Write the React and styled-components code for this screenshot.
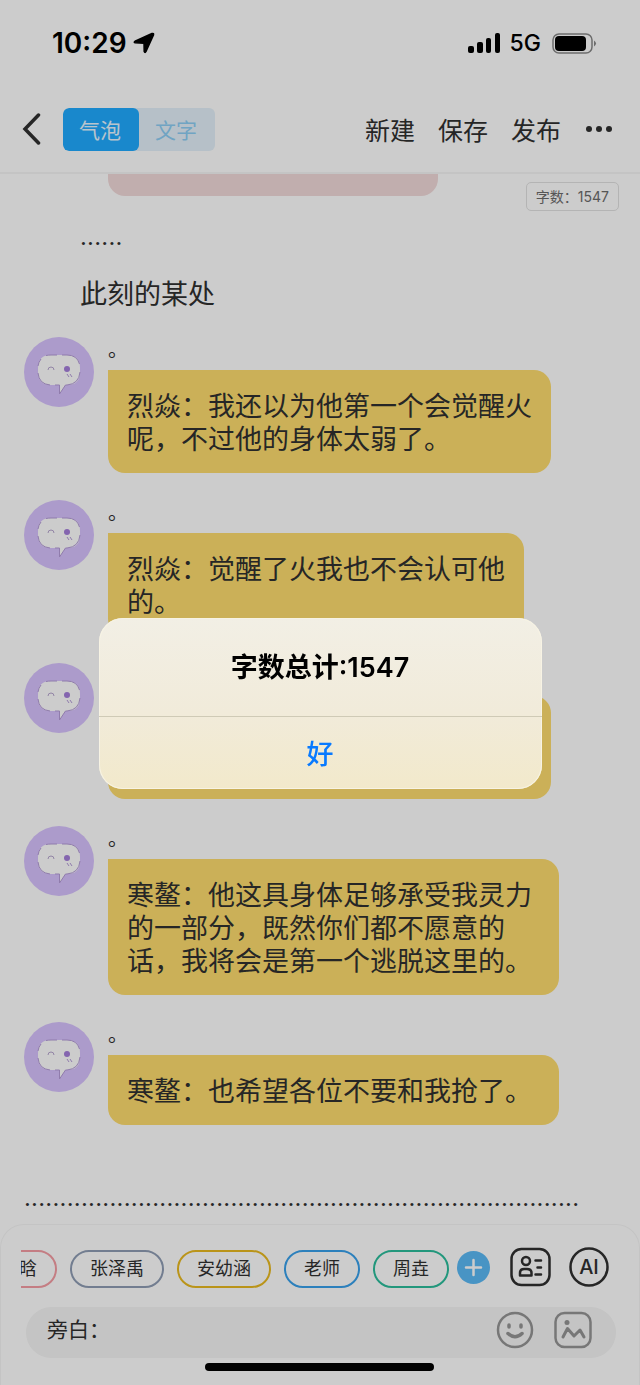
import React, { useState } from 'react';
import styled, { createGlobalStyle } from 'styled-components';

const GlobalStyle = createGlobalStyle`
  * {
    box-sizing: border-box;
  }
  body {
    margin: 0;
    background: #fff;
    color: #303030;
    font-family: Inter, "Noto Sans CJK SC", sans-serif;
  }
  button, input {
    font-family: inherit;
    color: inherit;
    padding: 0;
    border: 0;
    background: none;
  }
  svg {
    display: block;
  }
`;

const Page = styled.div`
  display: flex;
  flex-direction: column;
  min-height: 100vh;
`;

const StatusBar = styled.div`
  display: flex;
  align-items: center;
  height: 86px;
  padding: 0 43px 0 52px;
  color: #000;
`;

const Time = styled.span`
  font-size: 28px;
  font-weight: 600;
  line-height: 36px;
  margin-right: 6px;
`;

const Network = styled.span`
  font-size: 23px;
  font-weight: 500;
  line-height: 32px;
  margin: 0 11px 0 9px;
`;

const Spacer = styled.div`
  flex: 1;
`;

const Toolbar = styled.header`
  display: flex;
  align-items: center;
  height: 88px;
  padding: 0 27px 0 22px;
  border-bottom: 2px solid #f5f5f5;
`;

const BackButton = styled.button`
  width: 41px;
`;

const Tabs = styled.div`
  display: flex;
  border-radius: 6px;
  overflow: hidden;
  background: #e4f1fa;
`;

const Tab = styled.button`
  width: 76px;
  height: 43px;
  padding-right: 2px;
  font-size: 21px;
  border-radius: 6px;
  background: ${props => (props.$active ? '#20abff' : 'transparent')};
  color: ${props => (props.$active ? '#e8f6ff' : '#8ccdf4')};
`;

const Actions = styled.div`
  display: flex;
  align-items: center;
  gap: 23px;
`;

const Action = styled.button`
  padding-top: 3px;
  font-size: 25px;
  line-height: 36px;
`;

const MoreButton = styled.button`
  margin-left: 1px;
`;

const Chat = styled.main`
  position: relative;
  flex: 1;
  padding: 0 24px;
`;

const Counter = styled.div`
  position: absolute;
  top: 8px;
  right: 21px;
  padding: 0 9px;
  border: 1px solid #e2e2e2;
  border-radius: 5px;
  background: #fff;
  color: #6c6c6c;
  font-size: 14px;
  line-height: 27px;
`;

const PreviousBubble = styled.div`
  width: 330px;
  max-width: 70%;
  height: 22px;
  margin-left: 84px;
  border-radius: 0 0 17px 17px;
  background: #f2dada;
`;

const Narration = styled.p`
  margin: 0;
  padding: 22px 56px 14px;
  font-size: 27px;
  line-height: 40px;
`;

const Dots = styled.p`
  margin: 0;
  padding: ${props => (props.$inset ? '24px 56px 0' : '56px 0 0')};
  font-family: Roboto, sans-serif;
  font-size: 27px;
  line-height: 33px;
`;

const Messages = styled.div`
  display: flex;
  flex-direction: column;
  gap: 27px;
  padding-top: 8px;
`;

const MessageRow = styled.article`
  display: flex;
  align-items: flex-start;
  gap: 14px;
`;

const Name = styled.div`
  height: 33px;
  font-size: 20px;
  line-height: 26px;
`;

const Bubble = styled.div`
  width: fit-content;
  min-width: ${props => (props.$empty ? '443px' : '0')};
  min-height: ${props => (props.$empty ? '103px' : '70px')};
  padding: 20px ${props => (props.$wide ? '27px' : '19px')} 17px 19px;
  border-radius: 0 17px 17px 17px;
  background: #fedd6e;
  font-size: 27px;
  line-height: 33px;
  white-space: pre-line;
`;

const Footer = styled.footer`
  border: 1px solid #f6f6f6;
  border-bottom: 0;
  border-radius: 24px 24px 0 0;
  padding: 23px 22px 14px 20px;
`;

const CastRow = styled.div`
  display: flex;
  align-items: center;
  height: 42px;
`;

const Cast = styled.div`
  display: flex;
  flex: 1;
  min-width: 0;
  justify-content: flex-end;
  gap: 13px;
  overflow: hidden;
`;

const Pill = styled.button`
  flex: none;
  height: 38px;
  padding: 0 18px;
  border: 2px solid ${props => props.$color};
  border-radius: 19px;
  font-size: 18px;
  line-height: 34px;
`;

const CastTools = styled.div`
  display: flex;
  align-items: center;
  padding: 0 8px 4px 8px;
`;

const ToolButton = styled.button`
  margin-left: ${props => props.$gap || 0}px;
`;

const InputBar = styled.label`
  display: flex;
  align-items: flex-start;
  gap: 20px;
  height: 51px;
  margin: 17px 1px 5px 5px;
  padding: 4px 24px 0 21px;
  border-radius: 26px;
  background: #f5f5f5;
`;

const TextInput = styled.input`
  flex: 1;
  min-width: 0;
  height: 34px;
  font-size: 21px;
  outline: none;
`;

const HomeIndicator = styled.div`
  width: 229px;
  height: 8px;
  margin: 0 auto;
  border-radius: 4px;
  background: #000;
`;

const Overlay = styled.div`
  position: fixed;
  inset: 0;
  display: flex;
  align-items: center;
  justify-content: center;
  padding-top: 21px;
  background: rgba(0, 0, 0, 0.2);
`;

const Alert = styled.div`
  width: 443px;
  max-width: 90%;
  border-radius: 24px;
  overflow: hidden;
  background: linear-gradient(#f2efe5, #f1ebda 55%, #f2e9cb);
  box-shadow: inset 0 0 0 1px #f7f3e4;
  text-align: center;
`;

const AlertTitle = styled.h2`
  margin: 0;
  padding: 30px 20px 28px;
  color: #000;
  font-size: 27px;
  font-weight: 600;
  line-height: 40px;
`;

const AlertButton = styled.button`
  display: block;
  width: 100%;
  height: 73px;
  border-top: 1px solid #cfcab6;
  color: #087aff;
  font-size: 27px;
  font-weight: 500;
`;

const messages = [
  { text: '烈焱：我还以为他第一个会觉醒火\n呢，不过他的身体太弱了。' },
  { text: '烈焱：觉醒了火我也不会认可他\n的。' },
  { text: '' },
  { text: '寒鳌：他这具身体足够承受我灵力\n的一部分，既然你们都不愿意的\n话，我将会是第一个逃脱这里的。', wide: true },
  { text: '寒鳌：也希望各位不要和我抢了。', wide: true },
];

const cast = [
  { name: '晗', color: '#f59da4' },
  { name: '张泽禹', color: '#8f9db4' },
  { name: '安幼涵', color: '#e9ba20' },
  { name: '老师', color: '#37a0ec' },
  { name: '周垚', color: '#2bbd9b' },
];

const AvatarIcon = styled.svg`
  flex: none;
`;

const Avatar = () => (
  <AvatarIcon width="70" height="70" viewBox="0 0 70 70">
    <circle cx="35" cy="35" r="35" fill="#d8c2fe" />
    <path
      d="M27 18H43Q56 18 56 31V35Q56 48 43 48H41.5L35.5 57V48H27Q14 48 14 35V31Q14 18 27 18Z"
      fill="#fff"
    />
    <path
      d="M22 18.500Q24 18 27 18H33M38 18H43Q53 18 55.500 27M56 35Q55 47 43 48H41.5L35.5 57V48H31M26 48Q15 47 14 36M14 29Q14.500 25 17 22"
      fill="none"
      stroke="#b49bd8"
      strokeWidth="1"
    />
    <path d="M24 33Q24 30 27 30T30 33" fill="none" stroke="#b7a5cf" strokeWidth="1" />
    <circle cx="43" cy="32" r="3" fill="#a57fdb" />
    <path d="M43 37L45 40M46 37L48 40" stroke="#b49bd8" strokeWidth="1" />
  </AvatarIcon>
);

const LocationIcon = () => (
  <svg width="22" height="22" viewBox="0 0 22 22">
    <path
      d="M19 1.500 2 9.300Q.5 10.500 2 10.800L11 11.200 11.200 19.500Q12 21.500 13 19.500L20.500 3Q21 1 19 1.500Z"
      stroke="#000"
      strokeWidth="1.500"
      strokeLinejoin="round"
    />
  </svg>
);

const SignalIcon = () => (
  <svg width="33" height="21" viewBox="0 0 33 21">
    <rect x="0" y="13" width="6" height="7" rx="2" />
    <rect x="9" y="9" width="6" height="11" rx="2" />
    <rect x="18" y="5" width="5" height="15" rx="2" />
    <rect x="27" y="0" width="5" height="20" rx="2" />
  </svg>
);

const BatteryIcon = () => (
  <svg width="45" height="21" viewBox="0 0 45 21">
    <rect x="1" y="1" width="39" height="19" rx="6" fill="none" stroke="#888" strokeWidth="1.500" />
    <rect x="3" y="3" width="31" height="15" rx="4" />
    <path d="M42 7.500Q46 10.500 42 13.500Z" fill="#888" />
  </svg>
);

const BackIcon = () => (
  <svg width="19" height="32" viewBox="0 0 19 32" fill="none" stroke="#303030" strokeWidth="3.500" strokeLinecap="round">
    <path d="M16.500 2 3 16 16.500 30" />
  </svg>
);

const MoreIcon = () => (
  <svg width="28" height="8" viewBox="0 0 28 8" fill="#303030">
    <circle cx="4" cy="4" r="3" />
    <circle cx="14" cy="4" r="3" />
    <circle cx="24" cy="4" r="3" />
  </svg>
);

const PlusIcon = () => (
  <svg width="33" height="33" viewBox="0 0 33 33">
    <circle cx="16.500" cy="16.500" r="16.500" fill="#5bbaf6" />
    <path d="M16.500 9V24M9 16.500H24" stroke="#fff" strokeWidth="2.500" strokeLinecap="round" />
  </svg>
);

const MembersIcon = () => (
  <svg width="41" height="40" viewBox="0 0 41 40" fill="none" stroke="#303030" strokeWidth="2.500">
    <rect x="1.500" y="2" width="38" height="36" rx="10" />
    <circle cx="16" cy="14" r="4" />
    <path d="M10 28.500V26Q10 22 14 22H17Q21.500 22 21.500 26V28.500Z" strokeLinejoin="round" />
    <path d="M25.500 13.500H31M27.500 20.500H31M25.500 27.500H31" strokeLinecap="round" />
  </svg>
);

const AiIcon = () => (
  <svg width="40" height="40" viewBox="0 0 40 40">
    <circle cx="20" cy="20" r="18.500" fill="none" stroke="#303030" strokeWidth="2.500" />
    <text x="20" y="27" textAnchor="middle" fontSize="20" fontWeight="500" fill="#303030">AI</text>
  </svg>
);

const SmileIcon = () => (
  <svg width="38" height="38" viewBox="0 0 38 38" fill="none" stroke="#959595" strokeLinecap="round">
    <circle cx="19" cy="19" r="17" strokeWidth="2.500" />
    <path d="M13 14V16M25 14V16" strokeWidth="3.500" />
    <path d="M12 22.500Q19 29 26 22.500" strokeWidth="3.500" />
  </svg>
);

const PictureIcon = () => (
  <svg width="38" height="38" viewBox="0 0 38 38" fill="none" stroke="#959595">
    <rect x="1.500" y="2" width="35" height="34" rx="9" strokeWidth="2.500" />
    <circle cx="13" cy="11.500" r="2.500" fill="#959595" stroke="none" />
    <path d="M9 26 13.500 17.500 20 25 26 19 30 26" strokeWidth="3" strokeLinecap="round" strokeLinejoin="round" />
  </svg>
);

const App = () => {
  const [tab, setTab] = useState('bubble');
  const [draft, setDraft] = useState('旁白：');
  const [alertOpen, setAlertOpen] = useState(true);

  return (
    <>
      <GlobalStyle />
      <Page>
        <StatusBar>
          <Time>10:29</Time>
          <LocationIcon />
          <Spacer />
          <SignalIcon />
          <Network>5G</Network>
          <BatteryIcon />
        </StatusBar>
        <Toolbar>
          <BackButton aria-label="返回"><BackIcon /></BackButton>
          <Tabs>
            <Tab $active={tab === 'bubble'} onClick={() => setTab('bubble')}>气泡</Tab>
            <Tab $active={tab === 'text'} onClick={() => setTab('text')}>文字</Tab>
          </Tabs>
          <Spacer />
          <Actions>
            <Action>新建</Action>
            <Action>保存</Action>
            <Action>发布</Action>
            <MoreButton aria-label="更多"><MoreIcon /></MoreButton>
          </Actions>
        </Toolbar>
        <Chat>
          <Counter>字数：1547</Counter>
          <PreviousBubble />
          <Dots $inset>......</Dots>
          <Narration>此刻的某处</Narration>
          <Messages>
            {messages.map((message, index) => (
              <MessageRow key={index}>
                <Avatar />
                <div>
                  <Name>。</Name>
                  <Bubble $wide={message.wide} $empty={!message.text}>{message.text}</Bubble>
                </div>
              </MessageRow>
            ))}
          </Messages>
          <Dots>{'.'.repeat(78)}</Dots>
        </Chat>
        <Footer>
          <CastRow>
            <Cast>
              {cast.map(person => (
                <Pill key={person.name} $color={person.color}>{person.name}</Pill>
              ))}
            </Cast>
            <CastTools>
              <ToolButton aria-label="添加角色"><PlusIcon /></ToolButton>
              <ToolButton $gap={20} aria-label="角色列表"><MembersIcon /></ToolButton>
              <ToolButton $gap={18} aria-label="AI"><AiIcon /></ToolButton>
            </CastTools>
          </CastRow>
          <InputBar>
            <TextInput aria-label="输入内容" value={draft} onChange={e => setDraft(e.target.value)} />
            <ToolButton aria-label="表情"><SmileIcon /></ToolButton>
            <ToolButton aria-label="图片"><PictureIcon /></ToolButton>
          </InputBar>
          <HomeIndicator />
        </Footer>
      </Page>
      {alertOpen && (
        <Overlay>
          <Alert role="alertdialog" aria-labelledby="alert-title">
            <AlertTitle id="alert-title">字数总计:1547</AlertTitle>
            <AlertButton onClick={() => setAlertOpen(false)}>好</AlertButton>
          </Alert>
        </Overlay>
      )}
    </>
  );
};

export default App;
